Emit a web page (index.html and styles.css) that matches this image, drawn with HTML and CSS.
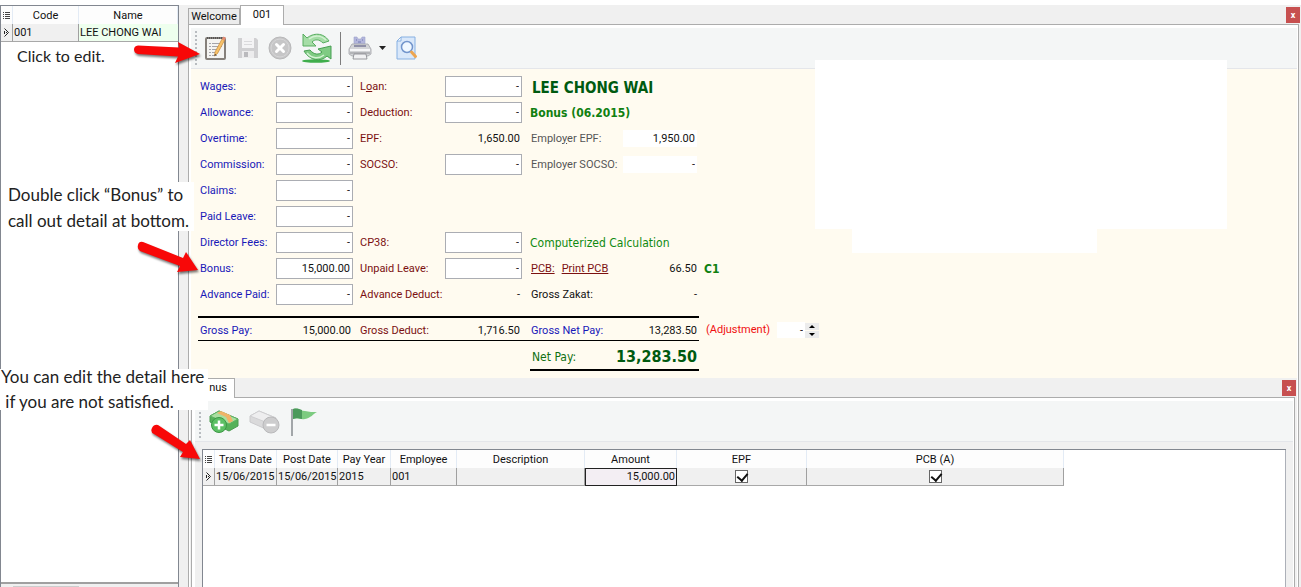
FILE: index.html
```
<!DOCTYPE html>
<html lang="en">
<head>
<meta charset="utf-8">
<title>Payroll - 001</title>
<link rel="stylesheet" href="styles.css">
</head>
<body>
<div class="app">
  <aside class="side">
    <table class="grid side-grid">
      <colgroup><col class="c-mark"><col class="c-code"><col></colgroup>
      <thead><tr>
        <th><svg width="7" height="9" viewBox="0 0 7 9"><path d="M0 1.500h1M2 1.500h5M0 3.500h1M2 3.500h5M0 5.500h1M2 5.500h5M0 7.500h1M2 7.500h5" stroke="#444"/></svg></th>
        <th>Code</th><th>Name</th></tr></thead>
      <tbody><tr>
        <td class="mark"><svg width="7" height="9" viewBox="0 0 7 9"><path d="M1.500 .5L5.500 4.500L1.500 8.500M1.500 3v3M3 4.500h1" fill="none" stroke="#222"/></svg></td>
        <td>001</td><td class="picked">LEE CHONG WAI</td></tr></tbody>
    </table>
    <div class="side-scroll"><div class="thumb"></div></div>
  </aside>

  <main class="main">
    <div class="tabs">
      <button class="tab back">Welcome</button><button class="tab front">001</button>
      <button class="close" aria-label="Close">x</button>
    </div>
    <section class="page">
      <div class="toolbar">
        <span class="grip"></span>
        <button class="tool" aria-label="Edit"><svg width="24" height="26" viewBox="0 0 24 26"><rect x="2" y="3" width="19" height="21" rx="1" fill="#f4f4f2" stroke="#85807b" stroke-width="2"/><path d="M3 3h17" stroke="#555" stroke-width="2" stroke-dasharray="1 1"/><path d="M5 8.500h2M8 8.500h10M5 11.500h2M8 11.500h10M5 14.500h2M8 14.500h8M5 17.500h2M8 17.500h6M5 20.500h2M8 20.500h5" stroke="#a4a4aa"/><path d="M18 4l2.500 1.500-7 13-3 2.500 .5-4z" fill="#f8c268" stroke="#c58a3c" stroke-width=".7"/><path d="M18 4l1.500-2.500 2.500 1.500-1.500 2.500z" fill="#e58a72"/><path d="M10.500 21l.4-2 1.400.8z" fill="#333"/></svg></button>
        <button class="tool" aria-label="Save"><svg width="22" height="24" viewBox="0 0 22 24"><path d="M1 2h18l2 2v18H1z" fill="#d0d0d2"/><path d="M5 2h12v10H5z" fill="#f4f4f5"/><path d="M7 5.500h8M7 8.500h8" stroke="#dadadc"/><path d="M5 15h12v7H5z" fill="#ececed"/><path d="M7 16h4v5H7z" fill="#bababd"/></svg></button>
        <button class="tool" aria-label="Cancel"><svg width="24" height="24" viewBox="0 0 24 24"><circle cx="12" cy="12" r="11" fill="#c6c6c7" stroke="#b8b8b9"/><circle cx="12" cy="12" r="9" fill="none" stroke="#d6d6d7"/><path d="M8.500 8.500l7 7M15.500 8.500l-7 7" stroke="#fff" stroke-width="3" stroke-linecap="round"/></svg></button>
        <button class="tool" aria-label="Refresh"><svg width="32" height="30" viewBox="0 0 32 30"><ellipse cx="15" cy="28" rx="14" ry="1.800" fill="#3fae4c"/><path d="M2 1l4 4C12 0 22-1 28 8l-6 2C18 6 14 6 11 9l4 4H2z" fill="#a5dda6" stroke="#58ad60"/><path d="M30 13v13l-4-3C20 29 9 28 3 18l6-1c4 5 9 5 12 2l-4-3z" fill="#7fcb83" stroke="#479f52"/><path d="M8 6C13 2 20 2 25 7M6 20c5 6 12 6 17 2" fill="none" stroke="#d3f2d2" stroke-width="1.500"/></svg></button>
        <span class="rule"></span>
        <button class="tool" aria-label="Print"><svg width="24" height="26" viewBox="0 0 24 26"><path d="M6 2h3l1 2h3l1-2h3v9H6z" fill="#b3b6dc" stroke="#a0a4cc" stroke-width=".6"/><path d="M8 5h1M14 5h1M10 7h3" stroke="#7078b0"/><path d="M4 9h16l3 5v5l-3 2H4l-3-2v-5z" fill="#d3d4d7" stroke="#a2a3a8" stroke-width=".8"/><path d="M6 11h12" stroke="#8f90a8" stroke-width="2"/><path d="M2 15h20" stroke="#f7f7f9" stroke-width="2"/><path d="M2 18h20" stroke="#a9aaae" stroke-width="1.500"/><path d="M6 19h12l1 5H5z" fill="#f1f1f3" stroke="#85868c" stroke-width=".8"/></svg></button>
        <button class="tool drop" aria-label="Print options"><svg width="7" height="4" viewBox="0 0 7 4"><path d="M0 0h7L3.500 4z" fill="#222"/></svg></button>
        <button class="tool" aria-label="Preview"><svg width="22" height="24" viewBox="0 0 22 24"><path d="M5 1h14v22H1V5z" fill="#d9e8fa" stroke="#86b0e2"/><path d="M5 1v4H1z" fill="#fff" stroke="#86b0e2"/><circle cx="11" cy="11" r="5.500" fill="#f0f8ff" stroke="#7295cc" stroke-width="1.500"/><path d="M15.500 16l4 4.500" stroke="#eda550" stroke-width="3" stroke-linecap="round"/></svg></button>
      </div>

      <form class="form">
        <div class="fields">
          <label class="blue" for="wages">Wa<u>g</u>es:</label><input id="wages" value="-">
          <label class="red" for="loan">L<u>o</u>an:</label><input id="loan" value="-">
          <h1 class="who">LEE CHONG WAI</h1>

          <label class="blue" for="allow">Allowance:</label><input id="allow" value="-">
          <label class="red" for="ded">Deduction:</label><input id="ded" value="-">
          <h2 class="run">Bonus (06.2015)</h2>

          <label class="blue" for="over">Overtime:</label><input id="over" value="-">
          <span class="red">EPF:</span><span class="num">1,650.00</span>
          <div class="pair"><label class="grey" for="eepf">Emplo<u>y</u>er EPF:</label><input class="flat" id="eepf" value="1,950.00"></div>

          <label class="blue" for="comm">Commission:</label><input id="comm" value="-">
          <label class="red" for="socso">SOCSO:</label><input id="socso" value="-">
          <div class="pair"><label class="grey" for="esoc">Employer SOCSO:</label><input class="flat" id="esoc" value="-"></div>

          <label class="blue" for="claims">Claims:</label><input id="claims" value="-">
          <label class="blue" for="leave">Paid Leave:</label><input id="leave" value="-">

          <label class="blue" for="fees">Director Fees:</label><input id="fees" value="-">
          <label class="red" for="cp38">CP38:</label><input id="cp38" value="-">
          <span class="calc">Computerized Calculation</span>

          <label class="blue" for="bonus">Bonus:</label><input id="bonus" value="15,000.00">
          <label class="red" for="unpaid">Unpaid Leave:</label><input id="unpaid" value="-">
          <div class="pair"><a class="red" href="#">PCB:</a><a class="red print" href="#">Print PCB</a><span class="num grow">66.50</span></div>
          <strong class="code">C1</strong>

          <label class="blue" for="adv">Advance Paid:</label><input id="adv" value="-">
          <span class="red">Advance Deduct:</span><span class="num">-</span>
          <div class="pair"><span>Gross Zakat:</span><span class="num grow">-</span></div>
        </div>
        <div class="sum-row">
          <div class="sums">
            <span class="blue">Gross Pay:</span><span class="num">15,000.00</span>
            <span class="red">Gross Deduct:</span><span class="num">1,716.50</span>
            <div class="pair"><span class="blue">Gross Net Pay:</span><span class="num grow">13,283.50</span></div>
          </div>
          <label class="adjust" for="adj">(Adjustment)</label>
          <input class="flat spin" id="adj" value="-">
          <span class="spinner"><button type="button" aria-label="Up"><svg width="6" height="3" viewBox="0 0 6 3"><path d="M0 3h6L3 0z"/></svg></button><button type="button" aria-label="Down"><svg width="6" height="3" viewBox="0 0 6 3"><path d="M0 0h6L3 3z"/></svg></button></span>
        </div>
        <div class="net"><span>Net Pay:</span><strong>13,283.50</strong></div>
      </form>

      <section class="detail">
        <div class="tabs low">
          <button class="tab front">nus</button>
          <button class="close" aria-label="Close detail">x</button>
        </div>
        <div class="detail-page">
          <div class="toolbar">
            <span class="grip"></span>
            <button class="tool" aria-label="Add"><svg width="32" height="28" viewBox="0 0 32 28"><path d="M2 8l9-5 19 8v7l-9 5L2 14z" fill="#55b159" stroke="#4a9c50"/><path d="M2 8l9-5 19 8-9 5z" fill="#a9dfa0" stroke="#5fb263"/><path d="M9 5l4-2 9 4 3 6-4 2-3-6z" fill="#f1b368"/><circle cx="11" cy="17" r="7.500" fill="#5cc064" stroke="#3c9845"/><path d="M11 12.500v9M6.500 17h9" stroke="#fff" stroke-width="2.500"/></svg></button>
            <button class="tool" aria-label="Remove"><svg width="32" height="28" viewBox="0 0 32 28"><path d="M1 8l9-5 17 7v7l-8 5L1 14z" fill="#dadadb" stroke="#cacacc"/><path d="M1 8l9-5 17 7-8 5z" fill="#eeeeef" stroke="#cfcfd1"/><circle cx="22" cy="17" r="8" fill="#cdcdce" stroke="#b9b9bb"/><path d="M17.500 17h9" stroke="#fff" stroke-width="2.500"/></svg></button>
            <button class="tool" aria-label="Flag"><svg width="28" height="30" viewBox="0 0 28 30"><path d="M2 2v27" stroke="#a2a6a9" stroke-width="2"/><path d="M3 2c5-2 8 2 12 2 4 1 8 1 12 1-4 2-6 6-12 7-5 1-7-2-12 0z" fill="#7ccb80"/><path d="M3 2c4-1 6 0 9 1v9c-4-1-6-1-9 0z" fill="#4c9a5c"/></svg></button>
          </div>
          <div class="sheet">
            <table class="grid detail-grid">
              <colgroup><col class="d0"><col class="d1"><col class="d2"><col class="d3"><col class="d4"><col class="d5"><col class="d6"><col class="d7"><col class="d8"></colgroup>
              <thead><tr>
                <th><svg width="7" height="9" viewBox="0 0 7 9"><path d="M0 1.500h1M2 1.500h5M0 3.500h1M2 3.500h5M0 5.500h1M2 5.500h5M0 7.500h1M2 7.500h5" stroke="#444"/></svg></th>
                <th>Trans Date</th><th>Post Date</th><th>Pay Year</th><th>Employee</th><th>Description</th><th>Amount</th><th>EPF</th><th>PCB (A)</th></tr></thead>
              <tbody><tr>
                <td class="mark"><svg width="7" height="9" viewBox="0 0 7 9"><path d="M1.500 .5L5.500 4.500L1.500 8.500M1.500 3v3M3 4.500h1" fill="none" stroke="#222"/></svg></td>
                <td>15/06/2015</td><td>15/06/2015</td><td>2015</td><td>001</td><td></td><td class="focus">15,000.00</td>
                <td class="mid"><input type="checkbox" class="tick" aria-label="EPF" checked></td>
                <td class="mid"><input type="checkbox" class="tick" aria-label="PCB (A)" checked></td></tr></tbody>
            </table>
          </div>
        </div>
      </section>
    </section>
  </main>
</div>

<div class="blank upper"></div>
<div class="blank lower"></div>

<p class="note n1">Click to edit.</p>
<p class="note n2">Double click “Bonus” to<br>call out detail at bottom.</p>
<p class="note n3">You can edit the detail here<br>&nbsp;if you are not satisfied.</p>
<svg class="arrow a1" width="72" height="28" viewBox="0 0 72 28"><path d="M6 4.500L47 6.500L46 1L68 13L43 22L46 15.500L6 13Q2 12 2 8.500T6 4.500z"/></svg>
<svg class="arrow a2" width="68" height="40" viewBox="0 0 68 40"><path d="M9 3L49 19L52 13L64 31L43 33L46 27L6 12Q3 10 4 6T9 3z"/></svg>
<svg class="arrow a3" width="56" height="44" viewBox="0 0 56 44"><path d="M9 2L37 21L41 17L51 36L31 34L34 29L5 11Q1 9 3 5T9 2z"/></svg>
</body>
</html>
```
FILE: styles.css
```
* { box-sizing: border-box; }
body {
  margin: 0;
  position: relative;
  min-height: 100vh;
  background: #fff;
  color: #111;
  font: 11px/14px Roboto, "Noto Sans", sans-serif;
  overflow: hidden;
}
button, input { font: inherit; color: inherit; margin: 0; }
button { padding: 0; border: 0; background: none; }
svg { display: block; }

.app { display: flex; height: 100vh; padding-top: 5px; }

/* employee list */
.side {
  flex: 0 0 179px;
  display: flex;
  flex-direction: column;
  justify-content: space-between;
  border: 1px solid #828790;
  border-bottom: 0;
}
.side-scroll { height: 5px; padding: 2px 0 0 12px; border-top: 2px solid #a0a0a0; background: #f0f0f0; }
.thumb { width: 66px; height: 2px; background: #cdcdcd; }

.grid { border-collapse: separate; border-spacing: 0; table-layout: fixed; }
.grid th { height: 18px; padding: 1px 0 0; font-weight: normal; background: #fdfdfd; border-right: 1px solid #e3ebf5; white-space: nowrap; }
.grid th svg { margin: 0 auto; }
.grid td { height: 18px; padding: 1px 1px 0; background: #f0f0f0; border-right: 1px solid #a0a0a0; border-bottom: 1px solid #a8a8a8; white-space: nowrap; }
.grid td.mark { padding: 0 2px; }
.side-grid { width: 100%; }
.c-mark { width: 12px; }
.c-code { width: 66px; }
.grid td.picked { background: #eeffee; border-right: 0; }

/* main frame */
.main { flex: 1; min-width: 0; display: flex; flex-direction: column; padding: 0 2px 0 9px; background: #f0f0f0; }
.tabs { display: flex; align-items: flex-end; height: 19px; flex: none; }
.tab { border: 1px solid #acacac; border-bottom: 0; }
.tab.back { width: 52px; height: 16px; background: #ececec; }
.tab.front { width: 44px; height: 20px; background: #fff; margin-bottom: -1px; padding-bottom: 1px; position: relative; }
.close { width: 14px; height: 16px; margin: 0 -1px 1px auto; background: #c75050; color: #fff; font-weight: bold; font-size: 9px; line-height: 12px; }
.page {
  flex: 1;
  min-height: 0;
  display: flex;
  flex-direction: column;
  border: 1px solid #acacac;
  border-bottom: 0;
  padding: 3px 1px 0 2px;
  background: #fff;
}
.toolbar { display: flex; align-items: center; height: 41px; flex: none; background: #f4f6f6; border-bottom: 1px solid #e4e6ea; }
.grip { width: 2px; height: 34px; margin: 0 7px 0 4px; background: repeating-linear-gradient(#b8bcc0 0 2px, transparent 2px 4px); }
.tool { margin-right: 9px; }
.tool.drop { margin: 0 10px 0 -2px; }
.rule { width: 1px; height: 33px; margin: 0 7px 0 -2px; background: #7d7d7d; }

/* pay form */
.form { flex: none; padding: 7px 0 7px 7px; background: #fffbf0; white-space: nowrap; }
.fields, .sums { display: grid; grid-template-columns: 78px 77px 92px 77px 177px auto; align-items: center; }
.fields { grid-auto-rows: 21px; row-gap: 5px; justify-content: start; }
.fields > .blue, .sums > .blue { grid-column: 1; padding-left: 2px; }
.fields > .red, .sums > .red { padding-left: 7px; }
.fields input { width: 77px; height: 21px; padding: 0 2px; border: 1px solid #abadb3; background: #fff; text-align: right; }
.fields .flat { flex: none; width: 74px; height: 17px; border: 0; margin: 0 2px 0 auto; }
.blue { color: #1818b8; }
.red { color: #7b1010; }
.grey { color: #555; }
.num { text-align: right; padding-right: 2px; }
.pair { display: flex; align-items: center; padding-left: 9px; }
.grow { flex: 1; }
.print { margin-left: 7px; }
.who, .run, .calc, .code, .net { font-family: "DejaVu Sans Condensed", sans-serif; }
.who, .run { margin: 0; padding-left: 8px; grid-column: 5 / 7; }
.who { font-size: 15px; color: #005a10; padding: 2px 0 0 10px; }
.run { font-size: 12px; color: #108010; }
.calc { grid-column: 5 / 7; padding-left: 8px; font-size: 12px; color: #108a10; }
.code { padding-left: 5px; font-size: 12px; color: #108010; }
.sum-row { display: flex; align-items: center; margin-top: 11px; }
.sums { grid-template-columns: 78px 77px 92px 77px 177px; width: 501px; height: 25px; padding-top: 3px; border-top: 2px solid #000; border-bottom: 1px solid #000; }
.adjust { width: 71px; margin-left: 7px; padding-top: 3px; color: #f01010; }
.spin { width: 28px; height: 16px; margin-top: 3px; padding: 0 2px; border: 0; background: #fff; text-align: right; }
.spinner { display: grid; gap: 1px; margin-top: 3px; }
.spinner button { display: grid; place-items: center; width: 14px; height: 7px; background: #ececec; }
.net {
  display: flex;
  align-items: center;
  justify-content: space-between;
  width: 169px;
  height: 30px;
  margin-left: 332px;
  padding: 3px 2px 0;
  border-bottom: 2px solid #000;
  font-size: 12px;
  color: #107010;
}
.net strong { font-size: 16px; color: #005a10; }

/* detail pane */
.detail { flex: 1; min-height: 0; display: flex; flex-direction: column; margin-left: -1px; padding-right: 2px; background: #f0f0f0; }
.low .tab.front { width: 45px; padding-right: 7px; text-align: right; }
.detail-page { flex: 1; min-height: 0; display: flex; flex-direction: column; margin-left: 1px; padding: 3px 1px 0 3px; border: 1px solid #acacac; border-bottom: 0; background: #fff; }
.detail-page .tool { padding-top: 2px; }
.sheet { flex: 1; min-height: 0; border: solid #f0f0f0; border-width: 7px 7px 0; background: #fff; box-shadow: inset 1px 1px #828790, inset -1px 0 #acb0b8; padding: 1px; }
.detail-grid { width: 861px; }
.d0 { width: 12px; }
.d1 { width: 62px; }
.d2 { width: 61px; }
.d3 { width: 53px; }
.d4 { width: 66px; }
.d5 { width: 128px; }
.d6 { width: 92px; }
.d7 { width: 130px; }
.grid td.focus { padding-top: 0; border: 1px solid #222; background: #f3eef3; text-align: right; }
.grid td.mid { padding-top: 0; text-align: center; line-height: 12px; }
.tick { appearance: none; display: inline-block; width: 13px; height: 13px; vertical-align: middle; border: 1px solid #666; background: #fff; position: relative; }
.tick:checked::after { content: ""; position: absolute; left: 3px; top: 0; width: 5px; height: 8px; border: solid #111; border-width: 0 2px 2px 0; transform: rotate(40deg); }

/* blanked-out areas */
.blank { position: absolute; background: #fff; }
.upper { left: 815px; top: 60px; width: 412px; height: 169px; }
.lower { left: 852px; top: 229px; width: 245px; height: 24px; }

/* callouts */
.note { position: absolute; margin: 0; font: 17px/26px Lato, sans-serif; color: #222; white-space: nowrap; }
.n1 { left: 17px; top: 43px; font-size: 16px; }
.n2 { left: 1px; top: 182px; width: 193px; height: 49px; padding-left: 7px; background: #fff; }
.n3 { left: 0; top: 364px; width: 208px; height: 46px; padding-left: 1px; line-height: 25px; background: linear-gradient(transparent 5px, #fff 5px); }
.arrow { position: absolute; fill: #f80808; filter: drop-shadow(1px 2px 1px #0008); }
.a1 { left: 132px; top: 41px; }
.a2 { left: 134px; top: 239px; }
.a3 { left: 149px; top: 423px; }
```
